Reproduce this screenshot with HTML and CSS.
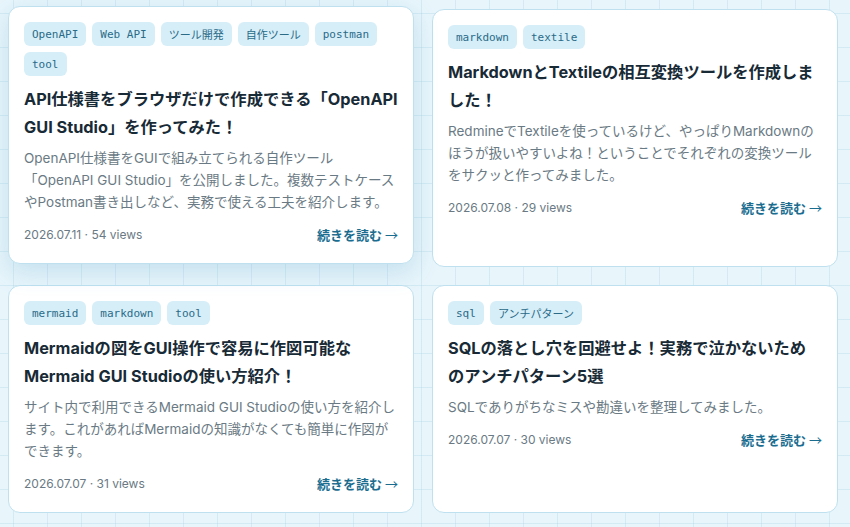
FILE: index.html
```html
<!DOCTYPE html>
<html lang="ja">
<head>
  <meta charset="UTF-8">
  <meta name="viewport" content="width=device-width, initial-scale=1.0">
  <title>Blog posts</title>
  <link rel="stylesheet" href="styles.css">
</head>
<body>
  <div class="post-grid">

    <!-- Post 1 (hovered) -->
    <article class="card card-raised">
      <div class="tags">
        <span class="tag">OpenAPI</span>
        <span class="tag">Web API</span>
        <span class="tag">ツール開発</span>
        <span class="tag">自作ツール</span>
        <span class="tag">postman</span>
        <span class="tag">tool</span>
      </div>
      <h2 class="card-title">API仕様書をブラウザだけで作成できる「OpenAPI GUI Studio」を作ってみた！</h2>
      <p class="card-desc">OpenAPI仕様書をGUIで組み立てられる自作ツール「OpenAPI GUI Studio」を公開しました。複数テストケースやPostman書き出しなど、実務で使える工夫を紹介します。</p>
      <div class="card-meta">
        <span class="meta-info">2026.07.11 · 54 views</span>
        <a class="read-more" href="#">続きを読む <span class="arrow">→</span></a>
      </div>
    </article>

    <!-- Post 2 -->
    <article class="card">
      <div class="tags">
        <span class="tag">markdown</span>
        <span class="tag">textile</span>
      </div>
      <h2 class="card-title">MarkdownとTextileの相互変換ツールを作成しました！</h2>
      <p class="card-desc">RedmineでTextileを使っているけど、やっぱりMarkdownのほうが扱いやすいよね！ということでそれぞれの変換ツールをサクッと作ってみました。</p>
      <div class="card-meta">
        <span class="meta-info">2026.07.08 · 29 views</span>
        <a class="read-more" href="#">続きを読む <span class="arrow">→</span></a>
      </div>
    </article>

    <!-- Post 3 -->
    <article class="card">
      <div class="tags">
        <span class="tag">mermaid</span>
        <span class="tag">markdown</span>
        <span class="tag">tool</span>
      </div>
      <h2 class="card-title">Mermaidの図をGUI操作で容易に作図可能なMermaid GUI Studioの使い方紹介！</h2>
      <p class="card-desc">サイト内で利用できるMermaid GUI Studioの使い方を紹介します。これがあればMermaidの知識がなくても簡単に作図ができます。</p>
      <div class="card-meta">
        <span class="meta-info">2026.07.07 · 31 views</span>
        <a class="read-more" href="#">続きを読む <span class="arrow">→</span></a>
      </div>
    </article>

    <!-- Post 4 -->
    <article class="card">
      <div class="tags">
        <span class="tag">sql</span>
        <span class="tag">アンチパターン</span>
      </div>
      <h2 class="card-title">SQLの落とし穴を回避せよ！実務で泣かないためのアンチパターン5選</h2>
      <p class="card-desc">SQLでありがちなミスや勘違いを整理してみました。</p>
      <div class="card-meta">
        <span class="meta-info">2026.07.07 · 30 views</span>
        <a class="read-more" href="#">続きを読む <span class="arrow">→</span></a>
      </div>
    </article>

  </div>
</body>
</html>
```

FILE: styles.css
```css
body {
  margin: 0;
  padding: 0;
  font-family: 'Inter', 'Noto Sans CJK JP', sans-serif;
  background-color: #e8f5fb;
  background-image:
    linear-gradient(to right, rgba(160, 205, 225, 0.28) 1px, transparent 1px),
    linear-gradient(to bottom, rgba(160, 205, 225, 0.28) 1px, transparent 1px);
  background-size: 34px 34px;
  background-position: 13px 13px;
  color: #1b2b36;
  height: 100vh;
  overflow: hidden;
}

.post-grid {
  display: grid;
  grid-template-columns: 1fr 1fr;
  gap: 18px;
  padding: 9px 12px 0 8px;
}

.card {
  display: flex;
  flex-direction: column;
  background: #ffffff;
  border: 1px solid #bfe1ef;
  border-radius: 12px;
  padding: 15px 15px 18px;
}

.card-raised {
  transform: translateY(-3px);
  box-shadow: 0 8px 24px rgba(70, 155, 195, 0.22);
}

.tags {
  display: flex;
  flex-wrap: wrap;
  gap: 6px;
}

.tag {
  display: inline-flex;
  align-items: center;
  height: 24px;
  padding: 0 8px;
  border-radius: 6px;
  background: #d6eef8;
  color: #2a6b88;
  font-family: 'DejaVu Sans Mono', 'Noto Sans CJK JP', monospace;
  font-size: 11px;
}

.card-title {
  margin: 10px 0 0;
  font-size: 16.3px;
  font-weight: 700;
  line-height: 27.5px;
  color: #172a36;
}

.card-desc {
  margin: 6px 0 0;
  font-size: 13.5px;
  line-height: 22px;
  color: #6a7a84;
}

.card-meta {
  display: flex;
  justify-content: space-between;
  align-items: center;
  margin-top: 12px;
  font-size: 12px;
  line-height: 20px;
}

.meta-info {
  color: #6a7a84;
}

.read-more {
  color: #1b6d90;
  font-size: 13px;
  font-weight: 700;
  text-decoration: none;
}

.arrow {
  font-family: 'Noto Sans CJK JP', sans-serif;
  font-weight: 400;
}
```
